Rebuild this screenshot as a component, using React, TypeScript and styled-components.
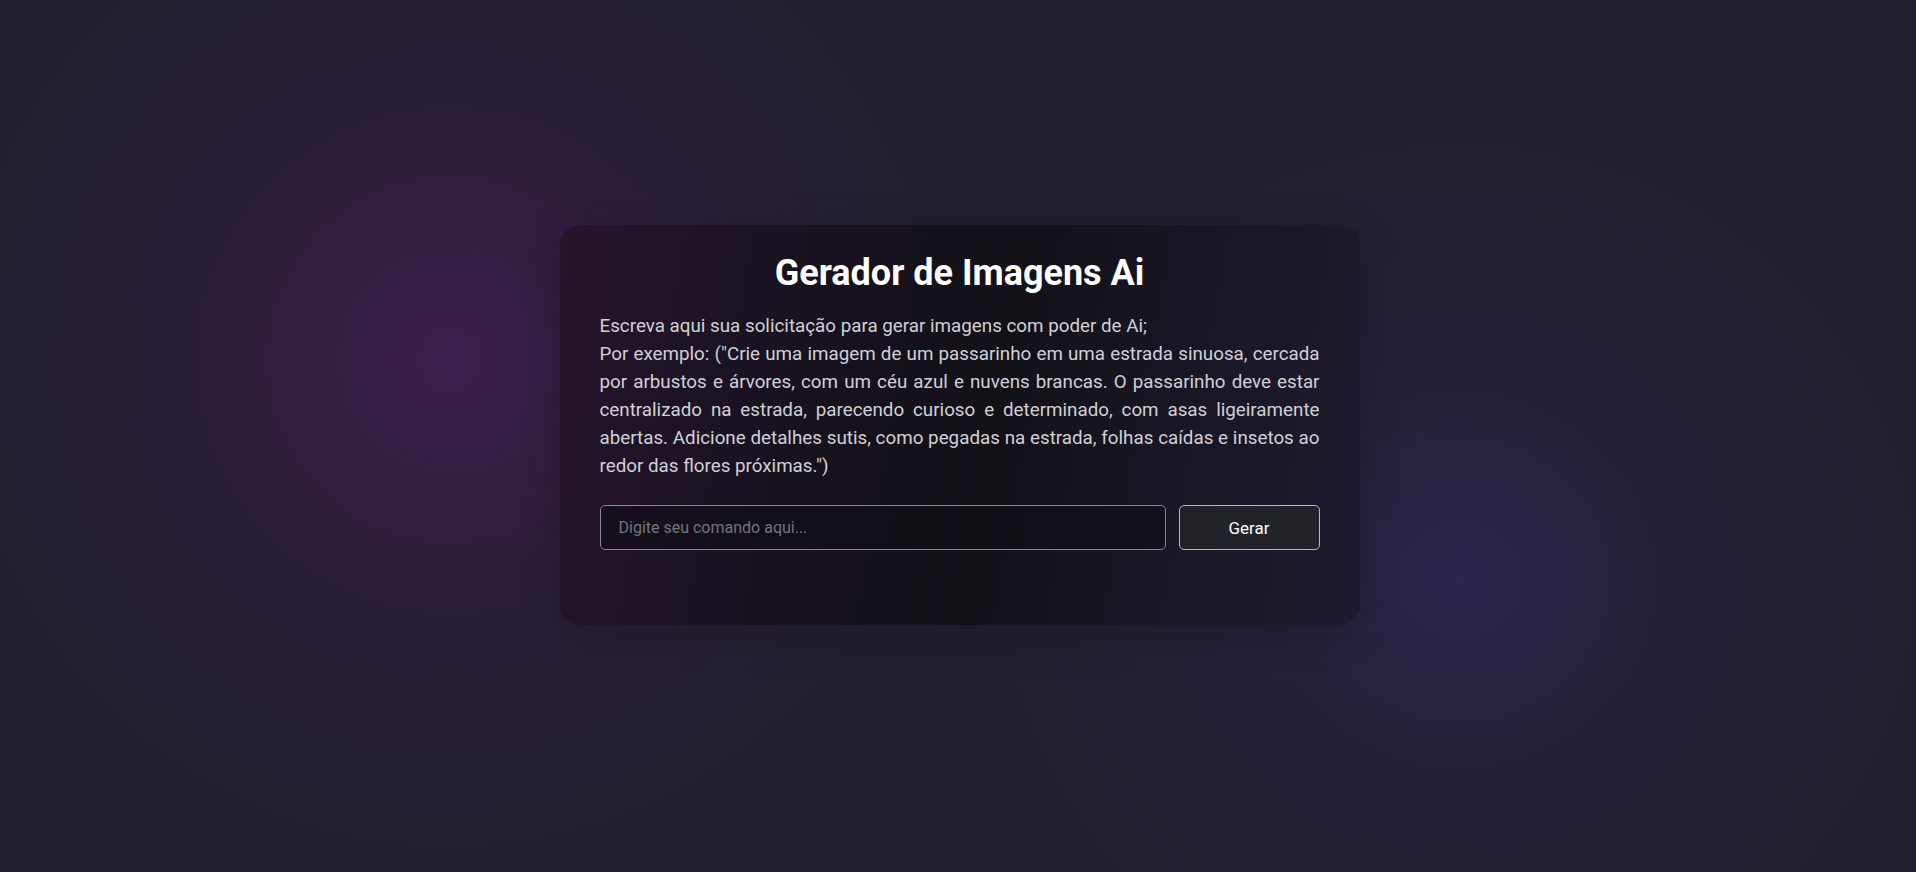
import React, { useState } from "react";
import styled, { createGlobalStyle } from "styled-components";

const GlobalStyle = createGlobalStyle`
  html, body {
    margin: 0;
    padding: 0;
    height: 100%;
  }
  body {
    font-family: Roboto, "Liberation Sans", Arial, sans-serif;
    background: #222030;
  }
  #root {
    height: 100%;
  }
`;

// Page background with the two soft glows
const Page = styled.main`
  min-height: 100vh;
  box-sizing: border-box;
  display: flex;
  justify-content: center;
  align-items: flex-start;
  padding: 225px 0 0 3px;
  background:
    radial-gradient(ellipse 500px 500px at 450px 360px, rgba(62, 30, 78, 0.95), rgba(50, 30, 66, 0.55) 50%, rgba(34, 32, 48, 0) 100%),
    radial-gradient(ellipse 470px 450px at 1460px 580px, rgba(44, 38, 80, 0.9), rgba(40, 34, 66, 0.45) 50%, rgba(34, 32, 48, 0) 100%),
    #222030;
`;

const Card = styled.section`
  width: 800px;
  min-height: 400px;
  box-sizing: border-box;
  padding: 24px 40px 40px;
  border-radius: 20px;
  background: linear-gradient(100deg, #26152c 0%, #18121f 30%, #131118 55%, #1a1826 80%, #1e1b30 100%);
  box-shadow: 0 10px 40px rgba(0, 0, 0, 0.2);
  color: #fff;
`;

const Title = styled.h1`
  margin: 0 0 15px;
  text-align: center;
  font-size: 36px;
  line-height: 48px;
  font-weight: 700;
  color: #ffffff;
`;

const Description = styled.p`
  margin: 0 0 25px;
  font-size: 18.8px;
  line-height: 28px;
  text-align: justify;
  color: #d2d0d6;
`;

const PromptRow = styled.div`
  display: flex;
  gap: 13px;
  align-items: stretch;
`;

const PromptInput = styled.input`
  flex: 1;
  height: 45px;
  box-sizing: border-box;
  padding: 0 18px;
  border: 1px solid #8a8790;
  border-radius: 5px;
  background: rgba(14, 12, 20, 0.55);
  color: #eee;
  font-family: Roboto, "Liberation Sans", Arial, sans-serif;
  font-size: 16px;
  outline: none;

  &::placeholder {
    color: #75737c;
  }
`;

const GenerateButton = styled.button`
  width: 141px;
  height: 45px;
  box-sizing: border-box;
  border: 1px solid #b9b8bd;
  border-radius: 5px;
  background: #212329;
  color: #ffffff;
  font-family: Roboto, "Liberation Sans", Arial, sans-serif;
  font-size: 17px;
  font-weight: 400;
  cursor: pointer;
`;

function App() {
  const [prompt, setPrompt] = useState<string>("");

  return (
    <>
      <GlobalStyle />
      <Page>
        <Card>
          <Title>Gerador de Imagens Ai</Title>
          <Description>
            Escreva aqui sua solicitação para gerar imagens com poder de Ai;
            <br />
            Por exemplo: ("Crie uma imagem de um passarinho em uma estrada
            sinuosa, cercada por arbustos e árvores, com um céu azul e nuvens
            brancas. O passarinho deve estar centralizado na estrada, parecendo
            curioso e determinado, com asas ligeiramente abertas. Adicione
            detalhes sutis, como pegadas na estrada, folhas caídas e insetos ao
            redor das flores próximas.")
          </Description>
          <PromptRow>
            <PromptInput
              placeholder="Digite seu comando aqui..."
              value={prompt}
              onChange={(e: React.ChangeEvent<HTMLInputElement>) =>
                setPrompt(e.target.value)
              }
            />
            <GenerateButton>Gerar</GenerateButton>
          </PromptRow>
        </Card>
      </Page>
    </>
  );
}

export default App;
